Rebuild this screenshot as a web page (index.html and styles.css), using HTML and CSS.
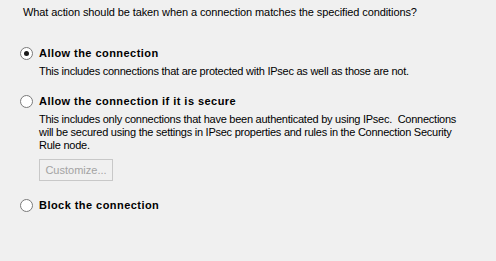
FILE: index.html
```html
<!DOCTYPE html>
<html>
<head>
    <title>Action</title>
    <link rel="stylesheet" href="styles.css">
</head>
<body>

<div class="page">
    <div class="question">What action should be taken when a connection matches the specified conditions?</div>

    <div class="option first">
        <div class="choice">
            <span class="radio checked"></span>
            <span class="label">Allow the connection</span>
        </div>
        <div class="desc">This includes connections that are protected with IPsec as well as those are not.</div>
    </div>

    <div class="option second">
        <div class="choice">
            <span class="radio"></span>
            <span class="label">Allow the connection if it is secure</span>
        </div>
        <div class="desc">This includes only connections that have been authenticated by using IPsec.&nbsp; Connections<br>will be secured using the settings in IPsec properties and rules in the Connection Security<br>Rule node.</div>
        <button class="customize" disabled>Customize...</button>
    </div>

    <div class="option third">
        <div class="choice">
            <span class="radio"></span>
            <span class="label">Block the connection</span>
        </div>
    </div>
</div>

</body>
</html>
```

FILE: styles.css
```css
body {
    margin: 0;
    background-color: #f0f0f0;
    font-family: "Liberation Sans", Arial, sans-serif;
    font-size: 11px;
    line-height: 13px;
    color: #000;
}
.page {
    width: 496px;
    height: 261px;
    padding: 6px 0 0 0;
    box-sizing: border-box;
}
.question {
    padding-left: 23px;
    letter-spacing: -0.1px;
}
.option {
    padding-left: 20px;
}
.option.first {
    margin-top: 28px;
}
.option.second {
    margin-top: 17px;
}
.option.third {
    margin-top: 18px;
}
.choice {
    display: flex;
    align-items: center;
    gap: 6px;
}
.radio {
    width: 11px;
    height: 11px;
    border: 1px solid #7a7a7a;
    border-radius: 50%;
    background-color: #fff;
    display: flex;
    align-items: center;
    justify-content: center;
    flex-shrink: 0;
}
.radio.checked::after {
    content: "";
    width: 5px;
    height: 5px;
    border-radius: 50%;
    background-color: #1a1a1a;
}
.label {
    font-weight: bold;
    letter-spacing: 0.45px;
}
.desc {
    margin-top: 5px;
    padding-left: 19px;
    width: 450px;
    white-space: nowrap;
    letter-spacing: -0.25px;
}
.customize {
    display: block;
    margin: 7px 0 0 19px;
    width: 74px;
    height: 22px;
    padding: 0;
    font-family: "Liberation Sans", Arial, sans-serif;
    font-size: 11px;
    color: #a3a3a3;
    background-color: #f0f0f0;
    border: 1px solid #c8c8c8;
    border-radius: 0;
}
```
